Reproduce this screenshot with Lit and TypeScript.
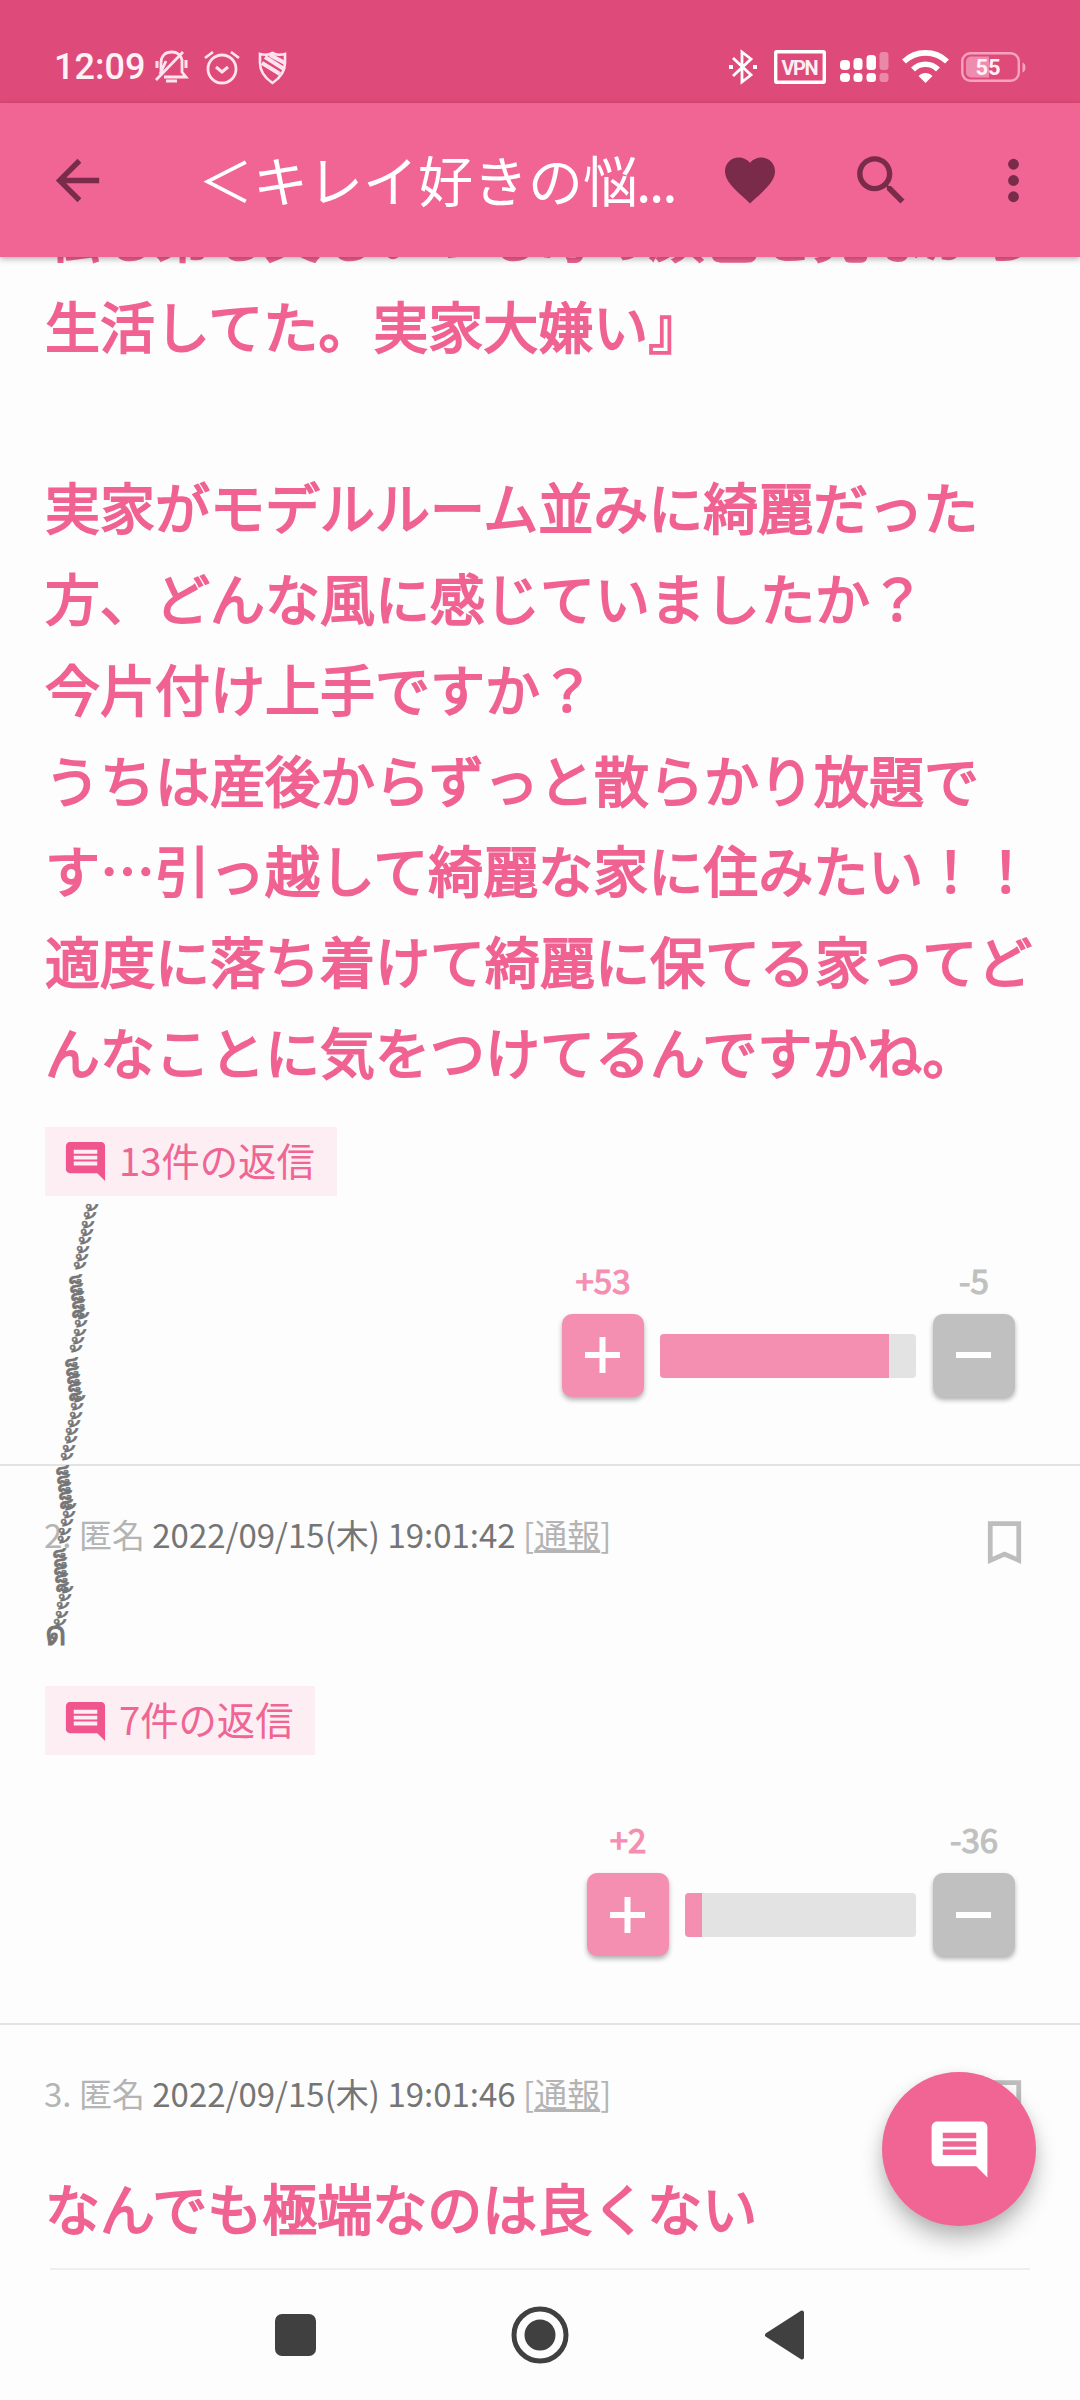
import { LitElement, html, css, svg, nothing } from "lit";
import { customElement, property } from "lit/decorators.js";

const COMMENT_PATH =
  "M21.99 4c0-1.1-.89-2-1.99-2H4c-1.1 0-2 .9-2 2v12c0 1.100.9 2 2 2h14l4 4-.01-18zM18 14H6v-2h12v2zm0-3H6V9h12v2zm0-3H6V6h12v2z";

const TONE = "\u0e49";
const SHORT = "\u0e47";
const BASE = "\u0e14";
// Stacked vowel marks, listed from the base letter upwards.
const STACK: Array<[string, number]> = [
  [TONE, 5], [SHORT, 5], [TONE, 5], [SHORT, 5], [TONE, 8],
  [SHORT, 5], [TONE, 5], [SHORT, 5], [TONE, 8],
];

interface Post {
  no?: number;
  time?: string;
  lines: string[];
  tower?: boolean;
  replies?: number;
  plus?: number;
  minus?: number;
  barWidth?: number;
  fill?: number;
}

const POSTS: Post[] = [
  {
    lines: [
      "私も弟も父もいつも母の顔色を見ながら",
      "生活してた。実家大嫌い』",
      "",
      "実家がモデルルーム並みに綺麗だった",
      "方、どんな風に感じていましたか？",
      "今片付け上手ですか？",
      "うちは産後からずっと散らかり放題で",
      "す…引っ越して綺麗な家に住みたい！！",
      "適度に落ち着けて綺麗に保てる家ってど",
      "んなことに気をつけてるんですかね。",
    ],
    replies: 13, plus: 53, minus: 5, barWidth: 256, fill: 89.7,
  },
  {
    no: 2, time: "2022/09/15(木) 19:01:42", lines: [], tower: true,
    replies: 7, plus: 2, minus: 36, barWidth: 231, fill: 7.5,
  },
  { no: 3, time: "2022/09/15(木) 19:01:46", lines: ["なんでも極端なのは良くない"] },
];

@customElement("status-bar")
class StatusBar extends LitElement {
  static styles = css`
    :host { display: flex; height: 103px; box-sizing: border-box; padding: 46px 53px 0 54px; background: #de4a79; justify-content: space-between; }
    .side { display: flex; align-items: center; height: 42px; }
    .time { font: 500 36px/42px Roboto, sans-serif; color: #fff2f7; width: 100px; white-space: nowrap; }
    svg { display: block; overflow: visible; }
    .battery { font: 700 22px Roboto, sans-serif; }
    .vpn { font: 700 20px Roboto, sans-serif; }
    .bell { margin-right: 15px; }
    .alarm { margin-right: 18px; }
    .bt { margin-right: 16px; }
    .vpnbox { margin-right: 14px; }
    .signal { margin-right: 13px; }
    .wifi { margin-right: 12px; }
  `;
  render() {
    return html`
      <div class="side">
        <span class="time">12:09</span>
        <svg class="bell" width="35" height="34" viewBox="0 0 35 34" fill="none" stroke="#ffe3ee" stroke-width="2.8">
          <path d="M7 21V13C7 6 11 2 18 2c5 0 9 3 10 8v12l4 5H10M2 30 29 2M12 11l-6 13"/>
          <path d="M12 31h11" stroke-width="3"/><path d="M3 11v7M32 10v8" stroke-width="3"/>
        </svg>
        <svg class="alarm" width="36" height="34" viewBox="0 0 36 34" fill="none" stroke="#ffe3ee" stroke-width="2.8">
          <circle cx="18" cy="19" r="14"/><path d="M1 8 9 2M35 8l-8-6"/><path d="m12 17 6 5 6-5" stroke-width="3"/>
        </svg>
        <svg width="29" height="33" viewBox="0 0 29 33" fill="none" stroke="#ffe3ee" stroke-width="2.6">
          <path d="M14.500 2C11 4 6 4 2 3v9c0 9 5 15 12.500 20C22 27 27 21 27 12V3c-4 1-9 1-12.500-1z"/>
          <path d="M12 4l15 8M7 6l19 12M4 12l18 11" stroke-width="4"/>
        </svg>
      </div>
      <div class="side">
        <svg class="bt" width="30" height="34" viewBox="0 0 30 34" fill="none" stroke="#fff" stroke-width="2.8">
          <path d="m5 8 18 17-9 7V2l9 7L5 26"/><path d="M1 17h4M25 17h4" stroke-width="4"/>
        </svg>
        <svg class="vpnbox" width="52" height="34" viewBox="0 0 52 34">
          <rect x="1.700" y="1.700" width="48.600" height="30.600" fill="none" stroke="#fff" stroke-width="3.400" rx="1"/>
          <text class="vpn" x="26" y="24.500" text-anchor="middle" fill="#ffeef4" textLength="37">VPN</text>
        </svg>
        <svg class="signal" width="49" height="34" viewBox="0 0 49 34" fill="#fff">
          <rect x="0" y="10" width="10" height="10" rx="4"/><rect x="13.500" y="8" width="9" height="12" rx="3.500"/>
          <rect x="26.500" y="5" width="9.500" height="15" rx="3.500"/><rect x="39.500" y="2" width="9" height="18" rx="3" opacity=".35"/>
          <rect x="0" y="23" width="10" height="9" rx="4"/><rect x="13.500" y="23" width="9" height="9" rx="3.500"/>
          <rect x="26.500" y="23" width="9.500" height="9" rx="3.500"/><rect x="39.500" y="23" width="9" height="9" rx="3" opacity=".35"/>
        </svg>
        <svg class="wifi" width="47" height="34" viewBox="0 0 47 34">
          <path d="M2 11.500C14 0 33 0 45 11.500M11 19.500c7-7 18-7 25 0" fill="none" stroke="#fff" stroke-width="5.600"/>
          <path d="M16.500 26c4-4 10-4 14 0l-7 7z" fill="#fff"/>
        </svg>
        <svg width="66" height="34" viewBox="0 0 66 34">
          <rect x="1.300" y="3.300" width="56.500" height="27.500" rx="8" fill="none" stroke="#f7a3c0" stroke-width="2.400"/>
          <path d="M10 6.500h18v21H10a5 5 0 0 1-5-5v-11a5 5 0 0 1 5-5z" fill="#ef8bae"/>
          <path d="M61.500 12.500c4 1 4 9 0 10z" fill="#f7a3c0"/>
          <text class="battery" x="27" y="25" text-anchor="middle" fill="#fff0f6">55</text>
        </svg>
      </div>
    `;
  }
}

@customElement("app-bar")
class AppBar extends LitElement {
  static styles = css`
    :host {
      display: flex; align-items: center;
      height: 154px; box-sizing: border-box; padding-left: 45px;
      background: #f06594; position: relative; z-index: 2; box-shadow: 0 2px 6px rgba(0, 0, 0, .3);
    }
    svg { display: block; fill: #7a2b49; flex: none; }
    .title { margin: 0 40px 4px 88px; width: 482px; font: 400 55px/80px "Noto Sans CJK JP", sans-serif; color: #fff; white-space: nowrap; }
    .dots { letter-spacing: -2.200px; margin-left: -2px; }
    .search { margin: 0 67px 0 69px; }
  `;
  render() {
    return html`
      <svg width="65" height="65" viewBox="0 0 24 24"><path d="M20 11H7.830l5.590-5.590L12 4l-8 8 8 8 1.410-1.410L7.830 13H20v-2z"/></svg>
      <div class="title">＜キレイ好きの悩<span class="dots">...</span></div>
      <svg width="60" height="60" viewBox="0 0 24 24"><path d="m12 21.350-1.450-1.320C5.400 15.360 2 12.280 2 8.500 2 5.420 4.420 3 7.500 3c1.740 0 3.410.81 4.500 2.090C13.090 3.810 14.760 3 16.500 3 19.580 3 22 5.420 22 8.500c0 3.780-3.400 6.860-8.550 11.540L12 21.350z"/></svg>
      <svg class="search" width="65" height="65" viewBox="0 0 24 24"><path d="M15.500 14h-.79l-.28-.27C15.410 12.590 16 11.110 16 9.500 16 5.910 13.090 3 9.500 3S3 5.910 3 9.500 5.910 16 9.500 16c1.610 0 3.090-.59 4.230-1.570l.27.28v.79l5 4.990L20.490 19l-4.990-5zm-6 0C7.010 14 5 11.990 5 9.500S7.010 5 9.500 5 14 7.010 14 9.500 11.990 14 9.500 14z"/></svg>
      <svg width="65" height="65" viewBox="0 0 24 24"><circle cx="12" cy="6" r="2"/><circle cx="12" cy="12" r="2"/><circle cx="12" cy="18" r="2"/></svg>
    `;
  }
}

@customElement("mark-tower")
class MarkTower extends LitElement {
  static styles = css`
    :host { display: block; height: 42px; position: relative; z-index: 1; }
    svg { display: block; overflow: visible; }
    text { font: 400 33px "Noto Sans CJK JP", sans-serif; fill: #757575; stroke: #757575; stroke-width: .5px; white-space: pre; }
    .base { stroke-width: 1px; }
  `;
  render() {
    const pitch = 8.3;
    let x = 11;
    let y = 49;
    // Tone marks climb to the right, short-vowel marks climb to the left.
    const marks = STACK.flatMap(([mark, n]) =>
      Array.from({ length: n }, () => {
        const glyph = svg`<text x=${x} y=${y}>${"\u00a0" + mark}</text>`;
        x += pitch * (mark === TONE ? 0.2 : -0.11);
        y -= pitch;
        return glyph;
      }),
    );
    return html`<svg width="60" height="42"><text class="base" x="0" y="40">${BASE}</text>${marks}</svg>`;
  }
}

@customElement("thread-post")
class ThreadPost extends LitElement {
  @property({ attribute: false }) post!: Post;
  static styles = css`
    :host { display: block; font-family: "Noto Sans CJK JP", sans-serif; border-bottom: 2px solid #e3e3e3; }
    :host([last]) { border-bottom: 0; }
    svg { display: block; }
    .meta { display: flex; justify-content: space-between; padding: 43px 47px 0 44px; height: 62px; color: #b4b4b4; font-size: 33px; line-height: 50px; white-space: pre; }
    .time { color: #757575; }
    .report { text-decoration: underline; }
    .mark { fill: #bdbdbd; margin-top: 5px; }
    .body { padding: 0 45px; font-size: 55px; line-height: 90.75px; font-weight: 400; -webkit-text-stroke: 1.9px #f06292; color: #f06292; margin-top: 31px; }
    .first { margin-top: -69px; padding-bottom: 4px; }
    .line { height: 90.75px; white-space: nowrap; }
    mark-tower { margin: 34px 0 0 45px; padding-bottom: 12.500px; }
    .chip { display: flex; width: max-content; align-items: center; height: 69px; margin: 27px 0 0 45px; padding: 0 22px 0 17px; box-sizing: border-box; background: #fceef3; color: #ef6594; font-size: 38.300px; line-height: 60px; }
    .chip svg { fill: #f0568d; margin: 1px 10px 0 0; }
    .chip span { margin-top: -3px; }
    .votes { display: flex; justify-content: flex-end; align-items: flex-end; gap: 16.500px; padding: 64px 65px 67px 0; }
    .vote { display: flex; flex-direction: column; align-items: center; gap: 14px; width: 82px; }
    .count { font-size: 33px; line-height: 40px; -webkit-text-stroke: 1.2px currentColor; white-space: nowrap; }
    .plus { color: #f48fb1; }
    .minus { color: #c0c0c0; }
    .btn { display: grid; place-items: center; width: 82px; height: 83px; border-radius: 10px; background: currentColor; box-shadow: 0 3px 5px rgba(0, 0, 0, .3); }
    .sign { fill: #fff; margin-right: 1px; }
    .bar { height: 44px; margin: 0 1px 19px -1px; border-radius: 4px; background: #e3e3e3; overflow: hidden; }
    .fill { height: 100%; background: #f48fb1; }
  `;
  private vote(kind: "plus" | "minus", n: number) {
    const vertical = kind === "plus" ? svg`<rect x="14.500" y="0" width="6" height="36"/>` : nothing;
    return html`<div class="vote ${kind}">
      <span class="count">${kind === "plus" ? "+" : "-"}${n}</span>
      <div class="btn"><svg class="sign" width="35" height="36" viewBox="0 0 35 36"><rect x="0" y="15" width="35" height="6"/>${vertical}</svg></div>
    </div>`;
  }
  render() {
    const p = this.post;
    return html`
      ${p.no === undefined ? nothing : html`<div class="meta">
        <div>${p.no}. 匿名 <span class="time">${p.time}</span> [<span class="report">通報</span>]</div><svg class="mark" width="57" height="57" viewBox="0 0 24 24"><path d="M17 3H5v18l7-3 7 3V3zm0 15-5-2.180L7 18V5h10v13z"/></svg>
      </div>`}
      ${p.tower
        ? html`<mark-tower></mark-tower>`
        : html`<div class="body ${p.no === undefined ? "first" : ""}">
            ${p.lines.map((l) => html`<div class="line">${l}</div>`)}
          </div>`}
      ${p.replies === undefined ? nothing : html`
        <div class="chip">
          <svg width="47" height="47" viewBox="0 0 24 24"><path d=${COMMENT_PATH}/></svg>
          <span>${p.replies}件の返信</span>
        </div>
        <div class="votes">
          ${this.vote("plus", p.plus!)}
          <div class="bar" style="width:${p.barWidth}px"><div class="fill" style="width:${p.fill}%"></div></div>
          ${this.vote("minus", p.minus!)}
        </div>`}
    `;
  }
}

@customElement("app-root")
class AppRoot extends LitElement {
  static styles = css`
    :host { display: flex; flex-direction: column; position: relative; width: 1080px; height: 2400px; overflow: hidden; background: #fdfdfd; }
    .feed { height: 2013px; overflow: hidden; display: flow-root; }
    .nav { flex: 1; display: flex; flex-direction: column; align-items: center; }
    .rule { width: 980px; height: 2px; margin-top: -2px; background: #efefef; }
    .keys { display: flex; align-items: center; gap: 195px; height: 130px; fill: #404040; }
    svg { display: block; }
    .fab { position: absolute; left: 882px; top: 2072px; width: 154px; height: 154px; border-radius: 50%; background: #f06594; display: grid; place-items: center; fill: #fff; box-shadow: 0 14px 22px rgba(0, 0, 0, .24), 0 3px 12px rgba(0, 0, 0, .08); }
  `;
  render() {
    return html`
      <status-bar></status-bar>
      <app-bar></app-bar>
      <div class="feed">
        ${POSTS.map((p, i) => html`<thread-post .post=${p} ?last=${i === POSTS.length - 1}></thread-post>`)}
      </div>
      <div class="nav">
        <div class="rule"></div>
        <div class="keys">
          <svg width="41" height="42"><rect width="41" height="42" rx="7"/></svg>
          <svg width="58" height="58"><circle cx="29" cy="29" r="26" fill="none" stroke="#404040" stroke-width="5"/><circle cx="29" cy="29" r="15.500"/></svg>
          <svg width="41" height="50"><path d="M38 2.500v45L3 25z" stroke="#404040" stroke-width="4" stroke-linejoin="round"/></svg>
        </div>
      </div>
      <div class="fab"><svg width="67" height="67" viewBox="0 0 24 24"><path d=${COMMENT_PATH}/></svg></div>
    `;
  }
}
